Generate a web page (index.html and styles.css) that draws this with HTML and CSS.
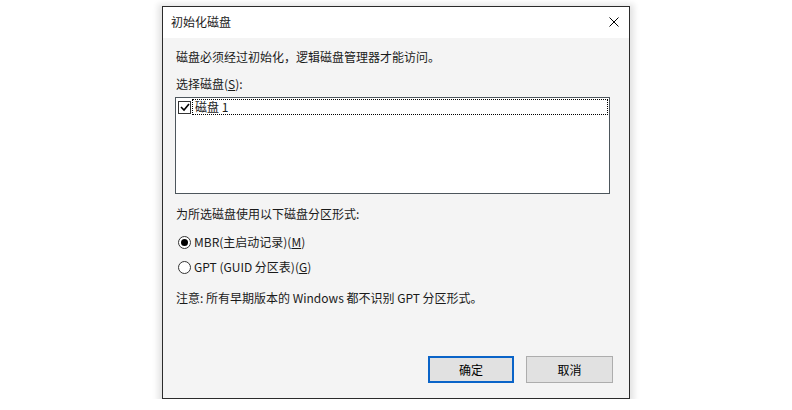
FILE: index.html
```html
<!DOCTYPE html>
<html>
<head>
  <title>初始化磁盘</title>
  <link rel="stylesheet" href="styles.css">
</head>
<body>
  <div class="dialog">
    <div class="titlebar">
      <span class="title">初始化磁盘</span>
      <span class="close">
        <svg width="10" height="10" viewBox="0 0 10 10"><path d="M0.5 0.5L9.5 9.5M9.5 0.5L0.5 9.5" stroke="#000" stroke-width="1"/></svg>
      </span>
    </div>
    <div class="content">
      <p class="intro">磁盘必须经过初始化，逻辑磁盘管理器才能访问。</p>
      <p class="label">选择磁盘(<u>S</u>):</p>
      <div class="listbox">
        <div class="list-item">
          <span class="checkbox">
            <svg width="10" height="10" viewBox="0 0 10 10"><path d="M1 5L4 8L9 2" fill="none" stroke="#000" stroke-width="1.6"/></svg>
          </span>
          <span class="item-text">磁盘 1</span>
        </div>
      </div>
      <p class="label style-label">为所选磁盘使用以下磁盘分区形式:</p>
      <div class="radio-row first">
        <span class="radio checked"></span>
        <span>MBR(主启动记录)(<u>M</u>)</span>
      </div>
      <div class="radio-row">
        <span class="radio"></span>
        <span>GPT (GUID 分区表)(<u>G</u>)</span>
      </div>
      <p class="note">注意: 所有早期版本的 Windows 都不识别 GPT 分区形式。</p>
      <div class="buttons">
        <button class="btn default">确定</button>
        <button class="btn">取消</button>
      </div>
    </div>
  </div>
</body>
</html>
```

FILE: styles.css
```css
body {
  margin: 0;
  background-color: #ffffff;
  font-family: "Noto Sans CJK SC", "Noto Sans", sans-serif;
  font-size: 12px;
  color: #1a1a1a;
}

p {
  margin: 0;
}

.dialog {
  width: 466px;
  height: 391px;
  margin: 6px auto 0;
  border: 1px solid #2b2b2b;
  background-color: #f4f4f4;
  box-shadow: 0 2px 6px 4px rgba(0, 0, 0, 0.11);
  display: flex;
  flex-direction: column;
}

.titlebar {
  height: 31px;
  background-color: #ffffff;
  display: flex;
  align-items: center;
  justify-content: space-between;
  padding: 0 10px 0 8px;
}

.title {
  line-height: 16px;
  margin-top: -1px;
}

.close {
  display: flex;
  margin-top: -2px;
}

.content {
  flex: 1;
  display: flex;
  flex-direction: column;
  padding: 11px 16px 15px 13px;
  line-height: 16px;
}

.label {
  margin-top: 11px;
}

.listbox {
  margin: 5px 3px 0 -1px;
  height: 94px;
  border: 1px solid #4d565c;
  background-color: #ffffff;
  padding: 1px 1px 0 1px;
}

.list-item {
  display: flex;
  align-items: center;
  height: 16px;
}

.checkbox {
  width: 11px;
  height: 11px;
  border: 1px solid #333;
  background-color: #fff;
  margin-left: 1px;
  display: flex;
  align-items: center;
  justify-content: center;
  flex-shrink: 0;
}

.item-text {
  flex: 1;
  margin-left: 1px;
  height: 14px;
  line-height: 14px;
  padding-left: 2px;
  border: 1px dotted #000;
}

.style-label {
  margin-top: 12px;
}

.radio-row {
  display: flex;
  align-items: center;
  gap: 3px;
  margin-top: 9px;
  padding-left: 2px;
}

.radio-row.first {
  margin-top: 12px;
}

.radio {
  width: 11px;
  height: 11px;
  border: 1px solid #333;
  border-radius: 50%;
  background-color: #fff;
  position: relative;
  flex-shrink: 0;
}

.radio.checked::after {
  content: "";
  position: absolute;
  left: 2px;
  top: 2px;
  width: 7px;
  height: 7px;
  border-radius: 50%;
  background-color: #000;
}

.note {
  margin-top: 15px;
}

.buttons {
  margin-top: auto;
  display: flex;
  justify-content: flex-end;
  gap: 12px;
}

.btn {
  width: 87px;
  height: 27px;
  background-color: #e1e1e1;
  border: 1px solid #adadad;
  font-family: inherit;
  font-size: 12px;
  color: #000;
  padding: 0;
}

.btn.default {
  width: 86px;
  border: 2px solid #0a64c8;
}
```
